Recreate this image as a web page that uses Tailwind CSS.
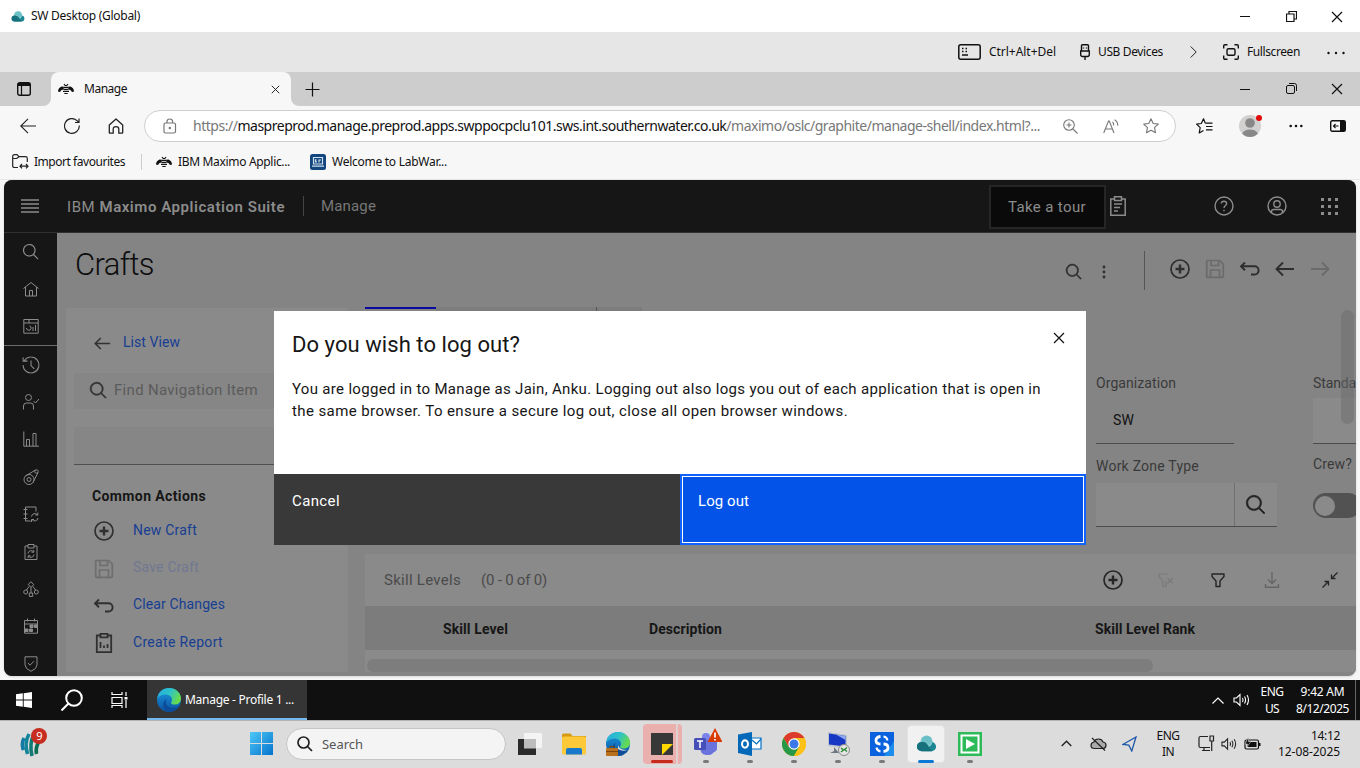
<!DOCTYPE html>
<html lang="en">
<head>
<meta charset="utf-8">
<title>SW Desktop (Global)</title>
<script src="https://cdn.jsdelivr.net/npm/@tailwindcss/browser@4"></script>
</head>
<body class="w-[1360px] h-[768px] overflow-hidden bg-[#f7f7f7] font-['Noto_Sans',sans-serif] text-[12px] leading-4 text-[#111] [&_svg]:shrink-0 [&_svg]:block [&_[data-fit]]:inline-block [&_[data-fit]]:whitespace-nowrap [&_[data-fit]]:shrink-0">
<svg class="absolute h-0 w-0" width="0" height="0" xmlns="http://www.w3.org/2000/svg">
  <symbol id="search" viewBox="0 0 32 32"><path fill="currentColor" d="M29,27.586l-7.552-7.552a11.018,11.018,0,1,0-1.414,1.414L27.586,29ZM4,13a9,9,0,1,1,9,9A9.01,9.01,0,0,1,4,13Z"/></symbol>
  <symbol id="add" viewBox="0 0 20 20"><circle cx="10" cy="10" r="9" fill="none" stroke="currentColor" stroke-width="1.700"/><path d="M10 5.500v9M5.500 10h9" stroke="currentColor" stroke-width="2.400"/></symbol>
  <symbol id="save" viewBox="0 0 20 20"><path d="M1.700 2.500q0-1 1-1h12l3.600 3.600v12.200q0 1-1 1H2.700q-1 0-1-1zM6 1.500v5h7.500v-5M5.500 18v-7h9v7" fill="none" stroke="currentColor" stroke-width="1.700"/></symbol>
  <symbol id="undo" viewBox="0 0 20 20"><path d="M5 3.500 1 7.300l4 3.900M1 7.300h13.500a4 4 0 0 1 0 8.200H11" fill="none" stroke="currentColor" stroke-width="1.900"/></symbol>
  <symbol id="left" viewBox="0 0 20 20"><path d="M8 3.500 1.500 10 8 16.500M1.500 10h17.500" fill="none" stroke="currentColor" stroke-width="1.900"/></symbol>
  <symbol id="bee" viewBox="0 0 16 12"><path d="M0 8.500Q0 5 3.500 3.500L6 3.800 5.500 6.500 3.500 7 2 9zM16 8.500Q16 5 12.500 3.500L10 3.800l.5 2.700 2 .5L14 9z" fill="#111"/><path d="M6 4.300h4M5.500 6.300h5M5 8.400h6M6.300 10.500h3.400M6 1 7.200 2.500h1.600L10 1" stroke="#111" stroke-width="1.200" fill="none"/></symbol>
  <symbol id="min" viewBox="0 0 12 12"><path d="M1 6.500h10" stroke="#111"/></symbol>
  <symbol id="close" viewBox="0 0 12 12"><path d="m1 1 10 10M11 1 1 11" stroke="#111" stroke-width="1.200"/></symbol>
  <symbol id="speaker" viewBox="0 0 18 14"><path d="M1 5h2.500L7 1.500v11L3.500 9H1zM9.500 5q1.200 2 0 4M11.500 3.500q2.200 3.500 0 7M14 2q3 5 0 10" fill="none" stroke="currentColor" stroke-width="1.100"/></symbol>
  <symbol id="cloud" viewBox="0 0 22 17"><rect x="1" y="7" width="20" height="9.500" rx="4.700" fill="#1b8692"/><circle cx="11" cy="6.500" r="6.300" fill="#7cc7cd"/><path d="M1 12q0-5 5-5.200Q11 6.500 13 11t4 5.500H6Q1 16 1 12z" fill="#16717c"/><path d="M6 5.500q4 .2 6 4.300 2.200-2.300 5-2.500Q16.500.500 11 .500 7 1 6 5.500z" fill="#6bc0c7"/></symbol>
  <linearGradient id="eb" x1="0" y1="0" x2="0" y2="1"><stop stop-color="#1b9de2"/><stop offset="1" stop-color="#0c4f9e"/></linearGradient>
  <linearGradient id="eg" x1="0" y1="0" x2="1" y2=".4"><stop stop-color="#2aa9e0"/><stop offset=".55" stop-color="#2cc3c9"/><stop offset="1" stop-color="#66da50"/></linearGradient>
  <symbol id="edge" viewBox="0 0 24 24"><circle cx="12" cy="12" r="12" fill="url(#eb)"/><path d="M.2 10.500C1.500 4 6 0 12 0c7 0 12 5 12 10.500 0 4-3 6-6.300 6-2.500 0-3.700-1-3.700-1.800 0-.7 1-1.200 1-3C15 9 12.500 6.500 8.500 6.500c-4 0-7 2-8.300 4z" fill="url(#eg)"/><path d="M9.500 10.500c-2 4.500.5 9 5.500 9.500 3 .3 5.500-.8 7.200-2.200C20 21.500 16.500 24 12 24c-5-1-8.500-8-2.500-13.500z" fill="#0b4d98"/></symbol>
</svg>

<!-- Remote desktop title bar -->
<header class="flex h-8 items-center bg-white pl-[11px]">
  <svg class="w-[14px] h-[11px]"><use href="#cloud"/></svg>
  <span data-fit="109" class="ml-[6px]">SW Desktop (Global)</span>
  <div class="ml-auto flex [&>span]:flex [&>span]:w-[46px] [&>span]:justify-center">
    <span><svg class="size-3"><use href="#min"/></svg></span>
    <span><svg class="mt-px size-[11px]" viewBox="0 0 11 11" fill="none" stroke="#111" stroke-width="1.200"><path d="M.5 3h7.500v7.500H.5zM3 3V.5h7.500V8H8"/></svg></span>
    <span><svg class="mt-px size-3"><use href="#close"/></svg></span>
  </div>
</header>

<div class="flex h-10 items-center justify-end bg-[#e6e6e6] pr-[15px]">
  <svg class="w-[23px] h-4" viewBox="0 0 23 16"><rect x=".8" y=".8" width="21.400" height="14.400" rx="2" fill="none" stroke="#111" stroke-width="1.500"/><path d="M4 4.500h1.500M7.500 4.500H9M4 7.500h1.500M7.500 7.500H9M4 11h6" stroke="#111" stroke-width="1.500"/></svg>
  <span data-fit="67" class="ml-2">Ctrl+Alt+Del</span>
  <svg class="ml-6 w-[10px] h-4" viewBox="0 0 10 16" fill="none" stroke="#111" stroke-width="1.400"><path d="M1.500 7V1.700Q1.500.7 2.500.7h5q1 0 1 1V7M.7 7h8.600v3.500q0 2-2 2H2.700q-2 0-2-2zM5 12.500V16M3.500 3.500v1M6.500 3.500v1"/></svg>
  <span data-fit="65" class="ml-2">USB Devices</span>
  <svg class="ml-[27px] w-[7px] h-3" viewBox="0 0 7 12"><path d="m.7.5 5.500 5.500-5.500 5.500" fill="none" stroke="#222"/></svg>
  <svg class="ml-[26px] size-4" viewBox="0 0 16 16" fill="none" stroke="#111" stroke-width="1.400"><path d="M.7 4.500V2Q.7.700 2 .7h2.500M11.500.7H14q1.300 0 1.300 1.300v2.500M15.300 11.500V14q0 1.300-1.300 1.300h-2.500M4.500 15.300H2Q.7 15.300.7 14v-2.500"/><rect x="4" y="4.700" width="8" height="6.600" rx="1.500"/></svg>
  <span data-fit="53" class="ml-2">Fullscreen</span>
  <svg class="ml-[27px] mt-px w-[18px] h-1" viewBox="0 0 18 4" fill="#111"><circle cx="1.500" cy="2" r="1.200"/><circle cx="9" cy="2" r="1.200"/><circle cx="16.500" cy="2" r="1.200"/></svg>
</div>

<!-- Browser tabs -->
<div class="flex h-[34px] bg-[#f7f7f7]">
  <div class="flex w-[51px] items-center rounded-br-lg bg-[#cdcdcd] pl-[17px]"><svg class="size-[14px]" viewBox="0 0 14 14"><rect x=".7" y=".7" width="12.600" height="12.600" rx="2" fill="none" stroke="#111" stroke-width="1.400"/><path d="M4.500 3v10" stroke="#111" stroke-width="1.200"/><path d="M1 1h12v3H1z" fill="#111"/></svg></div>
  <div class="w-[240px] bg-[#cdcdcd]"><div class="flex h-full items-center rounded-t-lg bg-[#f7f7f7] pl-[7px] pr-[11px]">
    <svg class="w-4 h-3"><use href="#bee"/></svg><span data-fit="43" class="ml-[10px]">Manage</span><svg class="ml-auto mt-px size-[9px]"><use href="#close"/></svg>
  </div></div>
  <div class="flex flex-1 items-center rounded-bl-lg bg-[#cdcdcd] pl-[14px]">
    <svg class="size-[15px]" viewBox="0 0 15 15"><path d="M7.500.5v14M.5 7.500h14" stroke="#111" stroke-width="1.200"/></svg>
    <div class="ml-auto flex [&>span]:flex [&>span]:w-[46px] [&>span]:justify-center">
      <span><svg class="size-3"><use href="#min"/></svg></span>
      <span><svg class="size-[11px]" viewBox="0 0 11 11" fill="none" stroke="#111"><rect x=".5" y="2.500" width="8" height="8" rx="1.500"/><path d="M3 .5h5.500q2 0 2 2V8"/></svg></span>
      <span><svg class="size-3"><use href="#close"/></svg></span>
    </div>
  </div>
</div>

<!-- Address bar -->
<div class="flex h-10 items-center pl-5">
  <svg class="size-4" viewBox="0 0 16 16" fill="none" stroke="#222" stroke-width="1.100"><path d="M8 .8.800 8 8 15.200M.8 8H16"/></svg>
  <svg class="ml-7 size-4" viewBox="0 0 16 16" fill="none" stroke="#222" stroke-width="1.200"><path d="M15.300 7.500A7.400 7.400 0 1 1 13 2.600l1.700 1.600M15 .5v4h-4"/></svg>
  <svg class="ml-7 size-4" viewBox="0 0 16 16" fill="none" stroke="#222" stroke-width="1.300" stroke-linejoin="round"><path d="M1.300 7 8 1l6.700 6v7.500q0 .7-.7.7h-3.200V11q0-2.300-2.800-2.300T5.200 11v4.200H2q-.7 0-.7-.7z"/></svg>
  <div class="ml-5 flex h-8 w-[1032px] items-center rounded-full border border-[#cfcfcf] bg-white pl-[18px] pr-4">
    <svg class="w-[14px] h-4" viewBox="0 0 14 16" fill="none" stroke="#777" stroke-width="1.200"><rect x="1" y="5" width="11.500" height="10" rx="1.500"/><path d="M4 5V3.500q0-2.500 2.800-2.500t2.800 2.500V5"/><circle cx="6.800" cy="10" r=".6" fill="#777"/></svg>
    <span data-fit="847" class="ml-4 text-[14px] leading-5 text-[#777]">https://<span class="text-[#111]">maspreprod.manage.preprod.apps.swppocpclu101.sws.int.southernwater.co.uk</span>/maximo/oslc/graphite/manage-shell/index.html?...</span>
    <svg class="ml-[23px] size-[15px]" viewBox="0 0 15 15" fill="none" stroke="#777" stroke-width="1.100"><circle cx="6" cy="6" r="5.300"/><path d="m10 10 4.500 4.500M3.500 6h5M6 3.500v5"/></svg>
    <svg class="ml-[25px] w-4 h-[15px]" viewBox="0 0 16 15" fill="none" stroke="#777" stroke-width="1.100"><path d="M.7 14 5.500 2h.8L11 14M2.300 10h7.200M9.500 3q1.500 1.300 1.200 3.500M11.500.7q3.500 2 3.300 6"/></svg>
    <svg class="ml-6 size-4" viewBox="0 0 16 16" fill="none" stroke="#777" stroke-width="1.100" stroke-linejoin="round"><path d="m8 .8 2.200 4.700 5.100.6-3.800 3.500 1 5.100L8 12.200l-4.500 2.500 1-5.100L.7 6.100l5.100-.6z"/></svg>
  </div>
  <svg class="ml-5 w-[17px] h-4" viewBox="0 0 17 16" fill="none" stroke="#111" stroke-width="1.200" stroke-linejoin="round"><path d="M9.200 5 7.500.8 5.300 5.500.6 6.100l3.600 3.500-1 5.300L7.500 12.500M9.200 5.200H16.500M10 8.500h6.500M10 11.800h6.500"/></svg>
  <svg class="ml-[26px] w-[24px] h-6" viewBox="0 0 24 24"><circle cx="11" cy="12" r="11" fill="#d3d1d0"/><circle cx="11" cy="9" r="4.800" fill="#888"/><path d="M3 19.500q2.500-4 8-4t8 4Q15.500 23 11 23t-8-3.500z" fill="#888"/><circle cx="20" cy="4" r="3" fill="#e00b0b"/></svg>
  <svg class="ml-[26px] w-[14px] h-1" viewBox="0 0 14 4" fill="#111"><circle cx="1.700" cy="2" r="1.300"/><circle cx="7" cy="2" r="1.300"/><circle cx="12.300" cy="2" r="1.300"/></svg>
  <svg class="ml-[27px] w-4 h-3" viewBox="0 0 16 12"><rect x=".7" y=".7" width="14.600" height="10.600" rx="1.500" fill="none" stroke="#111" stroke-width="1.400"/><path d="M10 1h5v10h-5z" fill="#111"/><path d="M8.500 6H3.500M5.500 4l-2 2 2 2" stroke="#111" fill="none" stroke-width="1.100"/></svg>
</div>

<!-- Favourites -->
<div class="flex h-[34px] items-center border-b border-[#e9e9e9] pl-3 pb-0.5">
  <svg class="w-[17px] h-[15px]" viewBox="0 0 17 15" fill="none" stroke="#222" stroke-width="1.200"><path d="M6 13.500H2.500Q.7 13.500.7 12V2.500Q.7.700 2.500.7H5l2 2h6.500q1.800 0 1.800 1.800V8M.7 4.500h4l2.300-1.800M8 12.200h8M10 10l-2 2.200 2 2.200M14 10l2 2.200-2 2.200"/></svg>
  <span data-fit="91" class="ml-[5px]">Import favourites</span>
  <span class="ml-4 h-4 w-px bg-[#ccc]"></span>
  <svg class="ml-[14px] w-4 h-3"><use href="#bee"/></svg>
  <span data-fit="112" class="ml-[6px]">IBM Maximo Applic...</span>
  <svg class="ml-5 size-4" viewBox="0 0 16 16"><rect width="16" height="16" rx="2.500" fill="#12467c"/><path d="M3.500 3.500h9v6.500h-9zM2 12.200h12M6.500 5.800h-1v2h1.500M9 8.500V6h2" fill="none" stroke="#cfe0ee" stroke-width="1.200"/></svg>
  <span data-fit="115" class="ml-[6px]">Welcome to LabWar...</span>
</div>

<!-- Maximo application, dimmed behind the dialog -->
<main class="relative mx-1 h-[496px] overflow-hidden rounded-lg bg-[#848484] font-['Roboto',sans-serif] text-[14px] text-[#3a3a3a] shadow">
  <div class="flex h-[53px] items-center border-b border-[#303030] bg-[#161616] pl-[17px] text-[#8c8c8c]">
    <svg class="w-[18px] h-[14px]" viewBox="0 0 18 14"><path d="M0 1h18M0 5h18M0 9h18M0 13h18" stroke="#8a8a8a" stroke-width="1.300"/></svg>
    <span data-fit="218" class="ml-7 mt-0.5 text-[15px]">IBM <b class="font-semibold">Maximo Application Suite</b></span>
    <span class="ml-[18px] h-5 w-px bg-[#454545]"></span>
    <span data-fit="55" class="ml-[17px] text-[15px] text-[#777]">Manage</span>
    <div class="ml-[613px] mt-0.5 flex h-11 w-[117px] items-center border-2 border-[#262626] bg-[#0a0a0a] pl-[17px]"><span data-fit="78" class="text-[15px]">Take a tour</span></div>
    <svg class="ml-1 w-4 h-5" viewBox="0 0 16 20" fill="none" stroke="currentColor" stroke-width="1.500"><path d="M4.500 3H.8v16.200h14.400V3h-3.700M4.500.8h7v3.700h-7zM4 8h8M4 11.500h6M4 15h4"/></svg>
    <svg class="ml-[88px] size-5" viewBox="0 0 20 20" fill="none" stroke="currentColor" stroke-width="1.400"><circle cx="10" cy="10" r="9"/><path d="M7.200 7.500Q7.500 5.200 10 5.200t2.700 2.300c0 2-2.700 2-2.700 4.500M10 13.700v1.500"/></svg>
    <svg class="ml-[33px] size-5" viewBox="0 0 20 20" fill="none" stroke="currentColor" stroke-width="1.400"><circle cx="10" cy="10" r="9"/><circle cx="10" cy="8" r="3.200"/><path d="M4.500 17v-1.500q0-2 2.200-2h6.600q2.200 0 2.200 2V17"/></svg>
    <svg class="ml-[33px] size-[19px]" viewBox="0 0 19 19"><path d="M1 2.500h17M1 9.500h17M1 16.500h17" stroke="currentColor" stroke-width="3" stroke-dasharray="3 4"/></svg>
  </div>

  <div class="flex h-[443px]">
    <nav class="flex w-[53px] shrink-0 flex-col bg-[#161616] text-[#8c8c8c] [&_span]:flex [&_span]:h-[37.4px] [&_span]:shrink-0 [&_span]:items-center [&_span]:justify-center [&_svg]:size-4">
      <div class="h-[113px] shrink-0 border-b border-[#6a6a6a]">
        <span><svg class="scale-115"><use href="#search"/></svg></span>
        <span><svg viewBox="0 0 16 16" fill="none" stroke="currentColor"><path d="M.5 7.500 8 1.500l7.500 6M2.500 6v9h11V6M6.500 15V9.500h3V15"/></svg></span>
        <span><svg viewBox="0 0 16 16" fill="none" stroke="currentColor"><path d="M.8 1.500h14.400v13.700H.800zM.8 5h14.400M6 1.500V5M3.500 10a2.300 2.300 0 1 0 3-2.200M10 13V9M12.500 13V7"/></svg></span>
      </div>
      <span><svg class="scale-110" viewBox="0 0 16 16" fill="none" stroke="currentColor"><path d="M2 4a7.200 7.200 0 1 1-1.200 4M.8 1v3.500h4M8 3.800V8.500l3 3"/></svg></span>
      <span><svg viewBox="0 0 16 16" fill="none" stroke="currentColor"><circle cx="5.500" cy="3.500" r="3"/><path d="M.5 15.500V12q0-3 3-3h4q3 0 3 3v3.500M10.500 7l2 2 3.500-4"/></svg></span>
      <span><svg viewBox="0 0 16 16" fill="none" stroke="currentColor"><path d="M.8.500v14.700H16M3.500 15V8.500h3V15M10 15V2.500h3V15"/></svg></span>
      <span><svg viewBox="0 0 16 16" fill="none" stroke="currentColor"><circle cx="6" cy="10.500" r="5"/><circle cx="6" cy="10.500" r="2"/><circle cx="13.500" cy="2.500" r="1.700"/><path d="m2.500 7 10-6M10 13.500l5-10"/></svg></span>
      <span><svg viewBox="0 0 16 16" fill="none" stroke="currentColor"><path d="M13 5.500V1H2.500v14h5M.5 3.500h4M.5 8h4M.5 12.500h4M8.500 10.500a3.300 3.300 0 0 1 6-1.500M15 12a3.300 3.300 0 0 1-6 1.500M14.800 6.500V9h-2.500M8.500 16v-2.500H11"/></svg></span>
      <span><svg viewBox="0 0 16 16" fill="none" stroke="currentColor"><path d="M5 2H2v13.500h12V2h-3M5 .5h6V4H5zM5 9.500a3 3 0 0 1 5.500-1.500M11 10.500A3 3 0 0 1 5.500 12M10.800 6v2.200H8.500M5.200 14v-2.200h2.300"/></svg></span>
      <span><svg viewBox="0 0 16 16" fill="none" stroke="currentColor"><path d="m8 .7 2.700 3L8 6.500l-2.700-3zM8 6.500v5.500M6 5.500 3.500 9M10 5.500 12.500 9"/><circle cx="2.700" cy="11" r="2"/><circle cx="13.300" cy="11" r="2"/><path d="M6.300 12h3.400v3.400H6.300z"/></svg></span>
      <span><svg viewBox="0 0 16 16" fill="none" stroke="currentColor"><path d="M1.500 2.500h13v12.700h-13zM4.500.5v3M11.500.5v3M1.500 6h13"/><path d="M7 7h3v2.500H7zM11.500 7h3v2.500h-3zM2 11h3v2.500H2zM6.500 11h3v2.500h-3z" fill="currentColor"/></svg></span>
      <span><svg viewBox="0 0 16 16" fill="none" stroke="currentColor"><path d="M2 .8h12v8q0 4-6 6.500-6-2.500-6-6.500zM5 7l2 2.200 4-4"/></svg></span>
    </nav>

    <section class="flex w-[1299px] shrink-0 flex-col">
      <div class="flex h-[74px] items-start pl-[18px] text-[#2e2e2e]">
        <h1 data-fit="79" class="mt-3 text-[31px] font-light leading-10 text-[#0d0d0d]">Crafts</h1>
        <svg class="ml-[911px] mt-[30px] size-[18px] stroke-current"><use href="#search"/></svg>
        <svg class="ml-[19px] mt-[32px] w-1 h-[14px]" viewBox="0 0 4 14" fill="currentColor"><circle cx="2" cy="2" r="1.400"/><circle cx="2" cy="7" r="1.400"/><circle cx="2" cy="12" r="1.400"/></svg>
        <span class="ml-[38px] mt-[18px] h-[39px] w-px bg-[#555]"></span>
        <div class="ml-[25px] mt-[26px] flex gap-[15px]">
          <svg class="size-5"><use href="#add"/></svg>
          <svg class="size-5 text-[#6b6b6b]"><use href="#save"/></svg>
          <svg class="size-5"><use href="#undo"/></svg>
          <svg class="size-5"><use href="#left"/></svg>
          <svg class="size-5 -scale-x-100 text-[#6b6b6b]"><use href="#left"/></svg>
        </div>
      </div>

      <div class="flex flex-1">
        <aside class="ml-[9px] mt-px h-[364px] w-[282px] shrink-0 bg-[#8a8a8a] text-[#173e92]">
          <div class="flex h-[65px] items-center pl-7 pt-[3px]"><svg class="mt-[3px] size-[17px] text-[#333]"><use href="#left"/></svg><span data-fit="57" class="ml-3">List View</span></div>
          <div class="ml-2 flex h-9 items-center bg-[#868686] pb-0.5 pl-[15px] text-[#5b5b5b]"><svg class="size-[19px] stroke-current text-[#333]"><use href="#search"/></svg><span data-fit="144" class="ml-[6px] text-[15px]">Find Navigation Item</span></div>
          <div class="ml-2 mt-[18px] h-[38px] border-b border-[#4f4f4f] bg-[#868686]"></div>
          <h2 class="flex h-[46px] items-center pl-[26px] pt-[15px] font-bold text-[#161616]"><span data-fit="114">Common Actions</span></h2>
          <ul class="[&>li]:flex [&>li]:h-[37.4px] [&>li]:items-center [&>li]:pl-7 [&_svg]:mt-[3px] [&_svg]:size-5 [&_svg]:text-[#303030] [&_span]:ml-[19px]">
            <li><svg><use href="#add"/></svg><span data-fit="64">New Craft</span></li>
            <li class="text-[#717891]"><svg class="opacity-30"><use href="#save"/></svg><span data-fit="66">Save Craft</span></li>
            <li><svg><use href="#undo"/></svg><span data-fit="92">Clear Changes</span></li>
            <li><svg viewBox="0 0 20 20" fill="none" stroke="currentColor" stroke-width="1.800"><path d="M6.500 2.500H2.800v16.700h14.400V2.500h-3.700M6.500.9h7v3.500h-7zM6.500 15V9M10 15v-2.500M13.500 15v-4"/></svg><span data-fit="90">Create Report</span></li>
          </ul>
        </aside>

        <div class="ml-[17px] w-[991px]">
          <div class="flex h-[247px] flex-col">
            <div class="flex h-1 shrink-0"><span class="h-0.5 w-[71px] bg-[#0a0a9c]"></span><span class="h-1 w-[160px] bg-[#7c7c7c]"></span><span class="h-1 w-px bg-[#555]"></span><span class="h-1 w-[45px] bg-[#7c7c7c]"></span></div>
            <div class="flex gap-[36px] pl-[731px] pt-[64px] text-[14px]">
              <div class="w-[181px] shrink-0">
                <span data-fit="80" class="h-[23px]">Organization</span>
                <div class="flex h-[46px] w-[138px] items-center border-b border-[#4b4b4b] pb-0.5 pl-[17px] text-[#111]"><span data-fit="21">SW</span></div>
                <span data-fit="103" class="mt-[14px] h-[25px]">Work Zone Type</span>
                <div class="flex h-11 border-b border-[#4b4b4b] bg-[#8a8a8a]"><span class="w-[139px] border-r border-[#707070]"></span><svg class="m-auto size-[22px] stroke-current text-[#222]"><use href="#search"/></svg></div>
              </div>
              <div class="w-[100px] shrink-0">
                <span data-fit="43" class="h-[23px]">Standa</span>
                <div class="h-[46px] border-b border-[#4b4b4b] bg-[#8a8a8a]"></div>
                <span data-fit="39" class="mt-3 h-[37px]">Crew?</span>
                <div class="flex h-[25px] w-12 items-center rounded-full bg-[#525252] pl-0.5"><span class="size-5 rounded-full bg-[#8a8a8a]"></span></div>
              </div>
            </div>
          </div>
          <div class="flex h-[52px] items-center bg-[#8a8a8a] pl-[19px] text-[15px] text-[#4b4b4b]">
            <span data-fit="77">Skill Levels</span><span data-fit="66" class="ml-5">(0 - 0 of 0)</span>
            <div class="ml-auto flex items-center pr-[18px] text-[#262626]">
              <svg class="size-5"><use href="#add"/></svg>
              <svg class="ml-[35px] size-4 text-[#7a7a7a]" viewBox="0 0 16 16" fill="none" stroke="currentColor" stroke-width="1.200"><path d="M10 2H1v2.500l4 4.500v5.500h3V9M9.500 6l5.500 5.500M15 6l-5.500 5.500"/></svg>
              <svg class="ml-9 size-4" viewBox="0 0 16 16" fill="none" stroke="currentColor" stroke-width="1.400" stroke-linejoin="round"><path d="M2 2h12v2.500L10 9v5.500H6V9L2 4.500z"/></svg>
              <svg class="ml-[38px] size-4 text-[#666]" viewBox="0 0 16 16" fill="none" stroke="currentColor" stroke-width="1.400"><path d="M8 0v11M4 7.500l4 4 4-4M1.500 12v3.300h13V12"/></svg>
              <svg class="ml-[42px] size-4" viewBox="0 0 16 16" fill="none" stroke="currentColor" stroke-width="1.300"><path d="m15.500.5-5.500 5.500M9.500 2.500v4h4M.5 15.500 6 10M2.500 9.500h4v4"/></svg>
            </div>
          </div>
          <div class="flex h-11 items-center bg-[#7c7c7c] pl-[78px] pt-0.5 font-bold text-[#161616]">
            <span data-fit="65">Skill Level</span><span data-fit="73" class="ml-[141px]">Description</span><span data-fit="100" class="ml-[373px]">Skill Level Rank</span>
          </div>
          <div class="h-[22px] bg-[#8a8a8a] pl-0.5 pt-[9px]"><div class="h-[13px] w-[786px] rounded-full bg-[#7d7d7d]"></div></div>
        </div>
      </div>
    </section>
  </div>
  <div class="absolute left-[1337px] top-[130px] h-[114px] w-[13px] rounded-full bg-[#6c6c6c]/50"></div>

  <!-- Log out dialog -->
  <div class="absolute left-[270px] top-[131px] flex h-[234px] w-[812px] flex-col bg-white text-[15px] text-[#161616]">
    <div class="h-[163px] pl-[18px]">
      <div class="flex h-[67px] items-start justify-between pr-[21px] pt-4"><h2 data-fit="228" class="text-[22px] leading-9">Do you wish to log out?</h2><svg class="mt-[5px] size-3"><use href="#close"/></svg></div>
      <p class="leading-[22px]"><span data-fit="749">You are logged in to Manage as Jain, Anku. Logging out also logs you out of each application that is open in</span><br><span data-fit="556">the same browser. To ensure a secure log out, close all open browser windows.</span></p>
    </div>
    <div class="flex h-[71px] text-white">
      <button class="flex w-[406px] items-start bg-[#393939] pl-[18px] pt-[19px]"><span data-fit="48">Cancel</span></button>
      <div class="w-[406px] border-2 border-[#0f62fe] bg-white p-px"><button class="flex h-full w-full items-start bg-[#0353e9] pl-[15px] pt-4"><span data-fit="51">Log out</span></button></div>
    </div>
  </div>
</main>

<!-- Remote taskbar -->
<div class="mt-1 flex h-10 items-center bg-[#101010] text-white">
  <svg class="ml-4 size-4" viewBox="0 0 16 16" fill="#fff"><path d="M0 2.300 6.800 1.300v6.200H0zM7.700 1.200 16 0v7.500H7.700zM0 8.400h6.800v6.300L0 13.700zM7.700 8.400H16V16l-8.300-1.200z"/></svg>
  <svg class="ml-[29px] size-[22px]" viewBox="0 0 22 22" fill="none" stroke="#fff" stroke-width="2"><circle cx="13" cy="9" r="7.800"/><path d="m7.500 14.500-7 7"/></svg>
  <svg class="ml-7 w-[17px] h-4" viewBox="0 0 17 16" fill="none" stroke="#fff" stroke-width="1.200"><path d="M1 0v2.500h10V0M1 5.500h10v6H1zM1 16v-2.500h10V16M15 0v4M15 8v8"/><path d="M13.500 5h3v2.500h-3z" fill="#fff" stroke="none"/></svg>
  <div class="ml-[19px] flex h-10 w-40 items-center border-b-2 border-[#76b9ed] bg-[#353535] pl-[10px] pt-0.5"><svg class="size-6"><use href="#edge"/></svg><span data-fit="109" class="ml-1">Manage - Profile 1 ...</span></div>
  <svg class="ml-auto w-3 h-[7px]" viewBox="0 0 12 7"><path d="m.5 6.500 5.500-5.500 5.500 5.500" fill="none" stroke="#fff" stroke-width="1.200"/></svg>
  <svg class="ml-[9px] w-[18px] h-[14px]"><use href="#speaker"/></svg>
  <div class="ml-[9px] flex w-6 flex-col items-center leading-[17px]"><span data-fit="23">ENG</span><span data-fit="14">US</span></div>
  <div class="ml-3 flex w-[53px] flex-col items-center leading-[17px]"><span data-fit="44">9:42 AM</span><span data-fit="53">8/12/2025</span></div>
  <span class="ml-[6px] mr-1 h-10 w-px bg-[#666]"></span>
</div>

<!-- Local taskbar -->
<div class="flex h-12 items-center border-t border-[#b5b5b5] bg-[#dcdcdc] pb-0.5">
  <svg class="ml-5 -mt-0.5 w-[28px] h-[30px]" viewBox="0 0 28 30"><g fill="none" stroke-width="3.600"><path d="M4 10q-3 6-.5 12" stroke="#127aa4"/><path d="M9 6q-5 9-1.500 20" stroke="#14849b"/><path d="M14 6q-5 10-2 22" stroke="#117a76"/><path d="M20 12q-5 7-3.500 14" stroke="#0c6d55"/></g><circle cx="19" cy="8" r="8" fill="#c72c20"/><text x="16.200" y="12" font-size="11" fill="#fff">9</text></svg>
  <svg class="ml-[202px] size-[23px]" viewBox="0 0 23 23"><linearGradient id="w" x2="1" y2="1"><stop stop-color="#4cc9f8"/><stop offset="1" stop-color="#0672cc"/></linearGradient><path fill="url(#w)" d="M0 0h11v11H0zM12 0h11v11H12zM0 12h11v11H0zM12 12h11v11H12z"/></svg>
  <div class="ml-[13px] flex h-8 w-[220px] items-center rounded-full border border-[#c5c5c5] bg-[#f4f4f4] pl-[10px] text-[#555]"><svg class="size-4" viewBox="0 0 16 16" fill="none" stroke="#222" stroke-width="1.700"><circle cx="6.500" cy="6.500" r="5.500"/><path d="m10.500 10.500 4.500 4.500"/></svg><span data-fit="41" class="ml-[9px] text-[13px]">Search</span></div>
  <div class="ml-0.5 flex [&>span]:relative [&>span]:flex [&>span]:h-12 [&>span]:w-11 [&>span]:items-center [&>span]:justify-center [&_i]:absolute [&_i]:bottom-[5px] [&_i]:h-[3px] [&_i]:w-[6px] [&_i]:rounded-full [&_i]:bg-[#7a7a7a]">
    <span><svg class="w-6 h-[22px]" viewBox="0 0 24 22"><rect y="6" width="18" height="16" fill="#2a2a2a"/><rect x="6" width="18" height="15" rx="1" fill="#f4f4f4"/><rect x="6" y="6" width="12" height="9.500" fill="#bdbdbd"/></svg></span>
    <span><svg class="w-6 h-[22px]" viewBox="0 0 24 22"><path d="M0 2q0-1.500 1.500-1.500h7L10.500 3H24v5H0z" fill="#d69a10"/><rect y="3.500" width="24" height="18" rx="1.500" fill="#fcc938"/><path d="M4 21.500V17q0-2 2-2h12q2 0 2 2v4.500z" fill="#1878cc"/></svg></span>
    <span><svg class="size-6" viewBox="0 0 24 24"><use href="#edge" width="24" height="24"/><path d="M12 13q1 5 9 5l-3 4-6 2z" fill="#dcdcdc"/><path d="M12 17q4 3 10 1-3 5-10 6z" fill="#0b4d98"/><rect y="16" width="12" height="8" rx="1" fill="#b9701c"/><path d="M0 19.500h12" stroke="#7b4209"/><path d="M4 16v-1.500h4V16" stroke="#7b4209" fill="none"/></svg></span>
    <span><svg class="h-10 w-10" viewBox="0 0 40 40"><rect x="1" width="39" height="40" rx="4" fill="#e9b0ad"/><path d="M35 0v40" stroke="#dcdcdc" stroke-width="1.500"/><path d="M9 9h22v22H9z" fill="#383838"/><path d="M20 20h11L20 31z" fill="#ffd800"/><rect x="9" y="36" width="22" height="3" rx="1.500" fill="#c42b1c"/></svg></span>
    <span><svg class="-mt-1 ml-1 w-7 h-[27px]" viewBox="0 0 28 27"><circle cx="12" cy="9" r="4" fill="#7b83eb"/><circle cx="21" cy="11" r="3" fill="#5059c9"/><path d="M6 12h17v8q0 3-3 4-3 4-8 3-6-1-6-8z" fill="#6a72dc"/><rect y="10" width="12" height="12" rx="1.500" fill="#464eb8"/><path d="M3 13h6M6 13v7" stroke="#fff" stroke-width="1.500"/><path d="M21 0 28.500 14h-15z" fill="#da3b01"/><path d="M21 4.500v5M21 11v1.500" stroke="#fff" stroke-width="1.700"/></svg><i></i></span>
    <span><svg class="w-6 h-6" viewBox="0 0 24 24"><path d="M13 6h10v11H13z" fill="#fff" stroke="#0072c6" stroke-width="1.200"/><path d="m14 8 4.500 4L23 7" fill="none" stroke="#0072c6" stroke-width="1.200"/><path d="m0 2.500 14-2.500v24L0 21z" fill="#0268b8"/><ellipse cx="7" cy="12" rx="3" ry="3.700" fill="none" stroke="#fff" stroke-width="2"/></svg><i></i></span>
    <span><svg class="size-6" viewBox="0 0 24 24"><circle cx="12" cy="12" r="12" fill="#fbc116"/><path d="M1.600 6A12 12 0 0 1 22.400 6H12L6.800 15z" fill="#db3a2c"/><path d="M1.600 6A12 12 0 0 0 12 24l5.200-9H6.800z" fill="#279847"/><path d="M12 6h10.400A12 12 0 0 1 12 24l5.200-9z" fill="#fbc116"/><circle cx="12" cy="12" r="5.700" fill="#fff"/><circle cx="12" cy="12" r="4.500" fill="#3b79e8"/></svg><i></i></span>
    <span><svg class="w-[23px] h-6" viewBox="0 0 23 24"><path d="M1 0 20 3v13L1 14z" fill="#bcc4cc"/><path d="M2 1.500 18.500 4v10.500L2 12.500z" fill="#1638c4"/><path d="M9 2.500 18.500 4v4z" fill="#8fa8ef"/><path d="M7 15v4l-4 2h9" fill="#6f7780"/><circle cx="17" cy="18" r="5.500" fill="#e4e4e4" stroke="#888"/><path d="m14 16 2.500 2-2.500 2M20 15.500 17.500 17.500l2.500 2" fill="none" stroke="#24872c" stroke-width="1.300"/></svg><i></i></span>
    <span><svg class="size-6" viewBox="0 0 24 24"><path fill="#0b62de" d="M0 0h24v24H0z"/><path fill="#1d8deb" d="M14 24 24 9v15z"/><path d="M10.500 4.500Q6 5 6 8.500t4.500 3.500M13.500 19.500q4.500-.5 4.500-4T13.500 12" fill="none" stroke="#fff" stroke-width="2.800"/><path d="M13.500 4.500q3.500.5 4 4M10.500 19.500q-3.500-.5-4-4" fill="none" stroke="#fff" stroke-width="2"/></svg><i></i></span>
    <span><b class="flex size-[38px] items-center justify-center rounded-[4px] border border-[#e2e2e2] bg-[#f1f1f1]"><svg class="w-[21px] h-[17px]"><use href="#cloud"/></svg></b><b class="absolute bottom-[5px] h-[3px] w-4 rounded-full bg-[#0a78d4]"></b></span>
    <span><svg class="size-6" viewBox="0 0 24 24"><path fill="#2cbb58" d="M0 0h24v24H0z"/><path d="M3.500 3.500h17v17h-17z" fill="none" stroke="#fff" stroke-width="2"/><path d="m8 7 9 5-9 5z" fill="#fff"/></svg><i></i></span>
  </div>
  <svg class="ml-[69px] w-[11px] h-[7px]" viewBox="0 0 11 7"><path d="m.7 6 4.800-4.800L10.300 6" fill="none" stroke="#222" stroke-width="1.400"/></svg>
  <svg class="ml-[18px] w-[17px] h-[14px]" viewBox="0 0 17 14" fill="none" stroke="#222" stroke-width="1.200"><path d="M4.500 11.500Q1 11.500 1 8.500T4 5q1-3 4.500-3T13 5q3 .3 3 3.300t-3 3.200z" fill="#aaa"/><path d="m2 1 13 12.500"/></svg>
  <svg class="ml-[15px] w-[15px] h-4" viewBox="0 0 15 16" fill="none" stroke="#1d57a8" stroke-width="1.300"><path d="M14 1 .8 8.500l6 .7 3 5.800z"/></svg>
  <div class="ml-[19px] flex w-6 flex-col items-center leading-4"><span data-fit="23">ENG</span><span data-fit="12">IN</span></div>
  <svg class="ml-[18px] w-[17px] h-[17px]" viewBox="0 0 17 17" fill="none" stroke="#222" stroke-width="1.200"><path d="M10 1.500H2.500Q1 1.500 1 3v8q0 1.500 1.500 1.500H12M12 1h3.500v5H12zM13.700 6v10M4 15.500h8M6 12.500v3"/></svg>
  <svg class="ml-[6px] w-[17px] h-[14px] text-[#222]"><use href="#speaker"/></svg>
  <svg class="ml-[6px] w-[17px] h-3" viewBox="0 0 17 12"><rect x="1" y="2" width="13.500" height="9" rx="1.500" fill="none" stroke="#111" stroke-width="1.200"/><path d="M5.500 4h7v5h-9zM15 5h1.500v3H15z" fill="#111"/><path d="M4.500-1 1 6h2.500L2.500 9.500 7 3.500H4.500z" fill="#111" stroke="#dcdcdc" stroke-width=".5"/></svg>
  <div class="ml-4 flex w-[63px] flex-col items-end leading-4"><span data-fit="29">14:12</span><span data-fit="62">12-08-2025</span></div>
</div>

<script>
// Spread each label evenly over the width its slot asks for, and again whenever the page's layout changes.
const labels = [...document.querySelectorAll('[data-fit]')];
function fitLabels() {
  labels.forEach(el => { el.style.letterSpacing = ''; });
  const gaps = labels.map(el => (Number(el.dataset.fit) - el.getBoundingClientRect().width) / el.textContent.length);
  labels.forEach((el, i) => { el.style.letterSpacing = gaps[i].toFixed(3) + 'px'; });
}
new ResizeObserver(fitLabels).observe(document.body);
addEventListener('load', fitLabels);
</script>
</body>
</html>
